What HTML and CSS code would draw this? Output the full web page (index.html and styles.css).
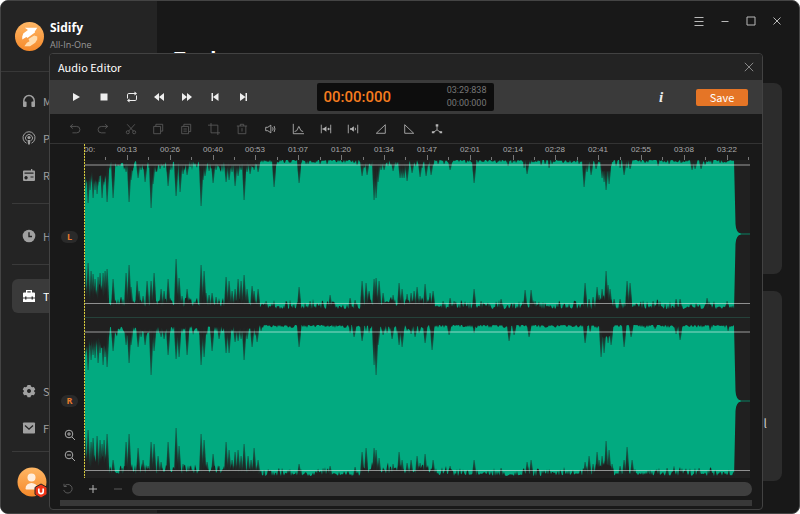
FILE: index.html
```html
<!DOCTYPE html>
<html lang="en">
<head>
<meta charset="utf-8">
<title>Sidify All-In-One</title>
<link rel="stylesheet" href="styles.css">
</head>
<body>
<div class="window">
  <aside class="sidebar">
    <header class="brand">
      <svg class="brand-logo" viewBox="0 0 28 28" aria-hidden="true">
        <defs><linearGradient id="orange" x1="0" y1="0" x2="0" y2="1"><stop offset="0" stop-color="#ffb765"/><stop offset="1" stop-color="#f5892a"/></linearGradient></defs>
        <circle cx="14" cy="14" r="14" fill="url(#orange)"/>
        <path d="M9.500 5.500H21.500L19 9.500L19.500 10L12 15.500L11 14.500L7 17V14L8 11L12.500 7.800Z" fill="#fff"/>
        <path d="M13 16.500L18.500 13L21.500 14V17L19.500 20L14.500 23.500H9L11.500 20L14 18.500Z" fill="#ffdcae"/>
      </svg>
      <div><div class="brand-name">Sidify</div><div class="brand-sub">All-In-One</div></div>
    </header>
    <nav class="nav">
      <a class="nav-item" href="#"><svg viewBox="0 0 14 14"><path d="M1.800 8V6.800a5.200 5.200 0 0 1 10.400 0V8" fill="none" stroke="currentColor" stroke-width="1.500"/><rect x="1" y="7.500" width="3.600" height="5.500" rx="1"/><rect x="9.400" y="7.500" width="3.600" height="5.500" rx="1"/></svg>M</a>
      <a class="nav-item" href="#"><svg viewBox="0 0 14 14"><g fill="none" stroke="currentColor"><path d="M4.500 12.200a6 6 0 1 1 5 0"/><path d="M4.500 9.500a3.500 3.500 0 1 1 5 0"/></g><circle cx="7" cy="6.500" r="1.600"/><path d="M5.500 9h3l-.6 4.500H6.100z"/></svg>P</a>
      <a class="nav-item" href="#"><svg viewBox="0 0 14 14"><path fill-rule="evenodd" d="M2 2.500h7V1h1.300v1.500H12a1 1 0 0 1 1 1V12a1 1 0 0 1-1 1H2a1 1 0 0 1-1-1V3.500a1 1 0 0 1 1-1zM2.500 4.500v1.300h9V4.500zM4 8a1.700 1.700 0 1 0 .1 0zM8.500 8.500v1h3v-1z"/></svg>R</a>
      <hr>
      <a class="nav-item" href="#"><svg viewBox="0 0 14 14"><circle cx="7" cy="7" r="6.300"/><path d="M7 3.300V7.500H10" fill="none" stroke="#242424" stroke-width="1.400"/></svg>H</a>
      <hr>
      <a class="nav-item active" href="#"><svg viewBox="0 0 14 14"><path fill-rule="evenodd" d="M4 3.500V1h6v2.500h2a1 1 0 0 1 1 1V8.500H11V7.500H9.500V8.500H4.500V7.500H3V8.500H1v-4a1 1 0 0 1 1-1zM5.300 2.200v1.300h3.400V2.200zM1 9.500h2v1h1.500v-1h5v1H11v-1h2V13H1z"/></svg>To</a>
    </nav>
    <nav class="nav nav-bottom">
      <a class="nav-item" href="#"><svg viewBox="0 0 14 14"><path fill-rule="evenodd" d="M5.500 1h3l.5 1.600 1.200.7 1.700-.4 1.400 2.500L12.200 6.500v1.200l1.100 1.100-1.400 2.500-1.700-.4-1.200.7-.5 1.600h-3L5 11.600l-1.200-.7-1.700.4L.7 8.800l1.100-1.100V6.500L.7 5.400l1.400-2.500 1.700.4L5 2.600zM7 5a2 2 0 1 0 .01 0z"/></svg>S</a>
      <a class="nav-item" href="#"><svg viewBox="0 0 14 14"><rect x="1" y="1.500" width="12" height="11" rx=".8"/><path d="M3 4.500l4 3.700 4-3.700" fill="none" stroke="#242424" stroke-width="1.300"/></svg>Fe</a>
      <hr>
    </nav>
    <button class="account" type="button" aria-label="Account">
      <svg viewBox="0 0 32 32"><circle cx="15" cy="15" r="14.500" fill="url(#orange)"/><circle cx="14.500" cy="10.500" r="4" fill="#ffeedd"/><path d="M8.500 21.500a6 5.500 0 0 1 12 0q0 1-1 1h-10q-1 0-1-1z" fill="#ffeedd"/><path d="M24 17l6 3.400v7L24 31l-6-3.600v-7z" fill="#ee3518" stroke="#242424"/><path d="M21.800 21.500v3a2.200 2.200 0 0 0 4.400 0v-3" fill="none" stroke="#fff" stroke-width="1.700"/></svg>
    </button>
  </aside>

  <main class="main">
    <div class="window-controls">
      <button type="button" aria-label="Menu"><svg viewBox="0 0 10 10"><path d="M.5 1.500h9M.5 5.500h9M.5 9.500h9"/></svg></button>
      <button type="button" aria-label="Minimize"><svg viewBox="0 0 10 10"><path d="M1.500 5.500h7"/></svg></button>
      <button type="button" aria-label="Maximize"><svg viewBox="0 0 10 10"><path d="M1 1h8v8H1z"/></svg></button>
      <button type="button" aria-label="Close"><svg viewBox="0 0 10 10"><path d="M1.500 1.500l7 7M8.500 1.500l-7 7"/></svg></button>
    </div>
    <h1>Tools</h1>
    <div class="cards"><section class="card"></section><section class="card"><span>l</span></section></div>
  </main>

  <div class="dialog" role="dialog" aria-labelledby="dialog-title">
    <header class="dialog-head"><h2 id="dialog-title">Audio Editor</h2>
      <button type="button" aria-label="Close editor"><svg viewBox="0 0 10 10"><path d="M.8 .8l8.400 8.400M9.200 .8L.8 9.200"/></svg></button>
    </header>
    <div class="transport">
      <div class="playback">
        <button type="button" aria-label="Play"><svg viewBox="0 0 14 14"><path d="M4 3l7 4-7 4z"/></svg></button>
        <button type="button" aria-label="Stop"><svg viewBox="0 0 14 14"><path d="M3.500 3.500h7v7h-7z"/></svg></button>
        <button type="button" aria-label="Loop"><svg viewBox="0 0 14 14"><path d="M2.500 8.500V4.800q0-1.300 1.300-1.300H11M11.500 5.500v3.700q0 1.300-1.300 1.300H3" fill="none" stroke="currentColor"/><path d="M9.500 1.500l2.500 2-2.500 2zM4.500 8.500l-2.500 2 2.500 2z"/></svg></button>
        <button type="button" aria-label="Rewind"><svg viewBox="0 0 14 14"><path d="M7 3v8L2 7zM12 3v8L7 7z"/></svg></button>
        <button type="button" aria-label="Forward"><svg viewBox="0 0 14 14"><path d="M2 3v8l5-4zM7 3v8l5-4z"/></svg></button>
        <button type="button" aria-label="Go to start"><svg viewBox="0 0 14 14"><path d="M3.500 3H5v8H3.500zM10.500 3v8L5 7z"/></svg></button>
        <button type="button" aria-label="Go to end"><svg viewBox="0 0 14 14"><path d="M9.500 3H11v8H9.500zM4 3v8l5.500-4z"/></svg></button>
      </div>
      <div class="readout"><output class="time-now">00:00:000</output><div class="time-total"><span>03:29:838</span><span>00:00:000</span></div></div>
      <div class="transport-end">
        <button class="info" type="button">i</button>
        <button class="save" type="button">Save</button>
      </div>
    </div>
    <div class="tools">
      <button type="button" disabled aria-label="Undo"><svg viewBox="0 0 14 14"><path d="M4.500 1.500l-3 2.500 3 2.500M1.500 4H9a3.500 3.500 0 0 1 0 7.500H4"/></svg></button>
      <button type="button" disabled aria-label="Redo"><svg viewBox="0 0 14 14"><path d="M9.500 1.500l3 2.500-3 2.500M12.500 4H5a3.500 3.500 0 0 0 0 7.500h5"/></svg></button>
      <button type="button" disabled aria-label="Cut"><svg viewBox="0 0 14 14"><path d="M2.500 1.500l7.300 8M11.500 1.500l-7.300 8"/><circle cx="3.300" cy="10.800" r="1.800"/><circle cx="10.700" cy="10.800" r="1.800"/></svg></button>
      <button type="button" disabled aria-label="Copy"><svg viewBox="0 0 14 14"><path d="M4.500 3.500v-2h8v8h-2M2 4h8v8.500H2z"/></svg></button>
      <button type="button" disabled aria-label="Paste"><svg viewBox="0 0 14 14"><path d="M4.500 3.500v-2h8v8.500h-2M2 4h8v8.500H2zM4 7h4M4 9.500h4"/></svg></button>
      <button type="button" disabled aria-label="Crop"><svg viewBox="0 0 14 14"><path d="M3.500 0v11.500H14M0 2.500h11.500V14"/></svg></button>
      <button type="button" disabled aria-label="Delete"><svg viewBox="0 0 14 14"><path d="M1 3.500h12M5 3.500v-2h4v2M2.500 3.500v9h9v-9M7 6v4"/></svg></button>
      <button type="button" aria-label="Volume"><svg viewBox="0 0 14 14"><path d="M2 5h2.500L8 2.500v9L4.500 9H2zM10 5q1.200 2 0 4M11.800 3.500q2 3.500 0 7"/></svg></button>
      <button type="button" aria-label="Envelope"><svg viewBox="0 0 14 14"><path d="M1.500 1v11.500H14M3 10l2.500-1 2.500-5 2.500 5 2.500 1"/></svg></button>
      <button type="button" aria-label="Trim silence"><svg viewBox="0 0 14 14"><path d="M1.500 2v10M12.500 2v10M9 7h3.500"/><path class="solid" d="M3 6h1.500l3-2.200v6.400L4.500 8H3zM8.500 7l2-1.800v3.600z"/></svg></button>
      <button type="button" aria-label="Insert silence"><svg viewBox="0 0 14 14"><path d="M1.500 2v10M12.500 2v10M9.500 5.500q1 1.500 0 3"/><path class="solid" d="M3.500 6H5l3-2.200v6.400L5 8H3.500z"/></svg></button>
      <button type="button" aria-label="Fade in"><svg viewBox="0 0 14 14"><path d="M1.500 12h10.500V2z"/></svg></button>
      <button type="button" aria-label="Fade out"><svg viewBox="0 0 14 14"><path d="M2 2v10H12.500z"/></svg></button>
      <button type="button" aria-label="Channels"><svg viewBox="0 0 14 14"><path d="M7 3v5l-4.500 3M7 8l4.500 3"/><path class="solid" d="M5.500 1.500h3v2.700h-3zM1 9.500h3v2.500H1zM10 9.500h3v2.500h-3z"/></svg></button>
    </div>
    <div class="editor">
      <div class="gutter">
        <div class="channel"><span>L</span></div>
        <div class="channel"><span>R</span></div>
        <div class="zoom">
          <button type="button" aria-label="Zoom in"><svg viewBox="0 0 12 12"><circle cx="5" cy="5" r="3.800"/><path d="M8 8l3 3M3 5h4M5 3v4"/></svg></button>
          <button type="button" aria-label="Zoom out"><svg viewBox="0 0 12 12"><circle cx="5" cy="5" r="3.800"/><path d="M8 8l3 3M3 5h4"/></svg></button>
        </div>
      </div>
      <div class="timeline">
        <div class="ruler"></div>
        <svg class="wave" id="wave-left" viewBox="0 0 666 151" preserveAspectRatio="none" aria-label="Left channel"></svg>
        <hr class="track-split">
        <svg class="wave" id="wave-right" viewBox="0 0 666 153" preserveAspectRatio="none" aria-label="Right channel"></svg>
        <div class="playhead"></div>
      </div>
    </div>
    <div class="zoom-row">
      <button type="button" disabled aria-label="Reset zoom"><svg viewBox="0 0 12 12"><path d="M2.500 3A4.300 4.300 0 1 1 1.700 7M2 .8v2.700h2.700"/></svg></button>
      <button type="button" aria-label="Widen"><svg viewBox="0 0 12 12"><path d="M2 6h8M6 2v8"/></svg></button>
      <button type="button" disabled aria-label="Narrow"><svg viewBox="0 0 12 12"><path d="M2 6h8"/></svg></button>
      <div class="range"></div>
    </div>
    <div class="status-bar"></div>
  </div>
</div>
<script src="wave.js"></script>
</body>
</html>
```
FILE: styles.css
```css
* { box-sizing: border-box; }
body { margin: 0; background: #fff; color: #eee; font: 12px/16px "Noto Sans CJK SC", "Open Sans", sans-serif; }
button { padding: 0; border: 0; background: none; color: inherit; font: inherit; display: flex; align-items: center; justify-content: center; }
h1, h2 { margin: 0; }
hr { margin: 0; border: 0; }
svg { display: block; }

.window { position: relative; display: flex; height: 100vh; border: 1px solid #444; border-radius: 8px; background: #181818; overflow: hidden; }
.sidebar { width: 156px; flex: none; display: flex; flex-direction: column; background: #242424; }
.brand { display: flex; gap: 6px; align-items: center; height: 71px; padding-left: 14px; border-bottom: 1px solid #383838; }
.brand-logo { width: 29px; height: 29px; }
.brand-name { font: 700 12px/18px "Open Sans", sans-serif; color: #fff; }
.brand-sub { font: 9px/16px "Open Sans", sans-serif; color: #999; }
.nav { padding: 11px 0 0 11px; }
.nav hr { height: 1px; background: #3a3a3a; margin: 9px 0 14px; }
.nav-item { display: flex; align-items: center; gap: 7px; height: 37px; padding: 0 0 2px 10px; color: #a0a0a0; font-size: 11px; text-decoration: none; }
.nav-item svg { width: 14px; height: 14px; fill: currentColor; }
.nav-item.active { height: 34px; padding-bottom: 0; background: #3a3a3a; color: #fff; border-radius: 6px; }
.nav-bottom { margin-top: auto; padding-top: 0; }
.nav-bottom hr { margin: 4px 0 15px; }
.account { width: 32px; height: 32px; margin: 0 0 14px 16px; }
.account svg { width: 32px; height: 32px; }

.main { flex: 1; display: flex; flex-direction: column; }
.window-controls { display: flex; justify-content: flex-end; gap: 10px; padding: 12px 14px 0 0; height: 46px; color: #b8b8b8; }
.window-controls button { width: 16px; height: 16px; }
.window-controls svg { width: 10px; height: 10px; fill: none; stroke: currentColor; }
h1 { padding-left: 17px; font: 700 20px/24px "Open Sans", sans-serif; color: #fff; }
.cards { flex: 1; display: flex; flex-direction: column; gap: 17px; padding: 12px 17px 32px 17px; }
.card { flex: 1; border-radius: 8px; background: #2c2c2c; }
.card span { display: block; padding: 124px 15px 0 0; text-align: right; color: #ccc; }

.dialog { position: absolute; inset: 52px 36px 3px 48px; display: flex; flex-direction: column; border: 1px solid #424242; border-radius: 4px; background: #191919; overflow: hidden; }
.dialog-head { display: flex; align-items: center; justify-content: space-between; height: 26px; padding: 0 8px; background: #232323; }
.dialog-head h2 { font-size: 11px; font-weight: 400; color: #fff; }
.dialog-head svg { width: 10px; height: 10px; fill: none; stroke: #888; }
.transport { display: grid; grid-template-columns: 1fr auto 1fr; align-items: center; height: 34px; padding: 0 14px 0 12px; background: #3a3a3a; }
.playback { display: grid; grid-template-columns: repeat(7, 1fr); width: 195px; }
.playback svg { width: 14px; height: 14px; fill: currentColor; }
.readout { display: flex; align-items: center; justify-content: space-between; width: 177px; height: 28px; padding: 0 7px; border-radius: 2px; background: #0d0d0d; font-family: Roboto, sans-serif; }
.time-now { color: #f57c1f; font-size: 15px; font-weight: 500; }
.time-total { display: grid; color: #777; font-size: 9px; line-height: 13px; }
.transport-end { display: flex; justify-content: flex-end; align-items: center; gap: 30px; }
.info { width: 10px; font: italic 700 15px/16px "Liberation Serif", serif; }
.save { width: 52px; height: 17px; border-radius: 2px; background: #e57526; color: #fff; font-size: 11px; }
.tools { display: grid; grid-template-columns: repeat(14, 1fr); width: 390px; height: 29px; margin-left: 11px; color: #b5b5b5; }
.tools svg { width: 12px; height: 12px; fill: none; stroke: currentColor; }
.tools .solid { fill: currentColor; stroke: none; }
button:disabled { color: #5a5a5a; }

.editor { display: flex; border-top: 1px solid #333; }
.gutter { width: 34px; flex: none; padding: 87px 0 0 11px; }
.channel { height: 164px; }
.channel span { display: block; width: 17px; height: 12px; border-radius: 6px; background: #2a2a2a; color: #e87a2c; font: 700 9px/12px "Open Sans", sans-serif; text-align: center; }
.zoom { display: grid; gap: 9px; width: 17px; margin-top: -130px; }
.zoom svg, .zoom-row svg { width: 12px; height: 12px; fill: none; stroke: currentColor; }
.zoom { color: #aaa; }
.timeline { position: relative; flex: 1; margin-right: 12px; background: #202020; }
.ruler { display: block; height: 16px; background: #191919; }
.ruler svg { width: 100%; height: 16px; }
.ruler text { fill: #aaa; font: 8px "Liberation Sans", sans-serif; text-anchor: middle; }
.wave { width: 100%; height: 151px; }
#wave-right { height: 153px; }
.track-split { height: 14px; background: linear-gradient(#25423a, #25423a) 0 6px / 100% 1px no-repeat; }
.playhead { position: absolute; inset: 0 auto 0 0; width: 1px; background: repeating-linear-gradient(#d6c93c 0 2px, #3a3820 2px 3px); }
.zoom-row { display: flex; align-items: center; gap: 13px; height: 21px; padding: 0 10px 0 12px; color: #b5b5b5; }
.zoom-row button { width: 12px; }
.range { flex: 1; height: 14px; border-radius: 7px; background: #3f3f3f; margin-left: -5px; }
.status-bar { height: 6px; margin: 1px 10px 0; background: #383838; }
```
FILE: wave.js
```js
// Timeline x of the first sample; transient positions below are in window x.
const ORIGIN = 84;

const leftTop = "85:28 88:43 90:30 93:38 95:30 97:34 99:22 102:38 104:22 107:42 109:8 113:38 116:4 120:6 126:12 129:42 131:20 133:8 138:18 141:10 145:22 149:8 151:48 153:24 156:12 160:9 164:8 168:26 170:10 176:36 180:32 183:14 187:15 190:7 201:46 203:20 205:16 209:11 213:23 216:10 220:8 226:22 229:20 232:12 235:26 238:16 241:10 244:40 247:12 250:14 254:10 258:12 274:27 276:5 299:23 301:3 306:4 308:4 315:3 320:4 327:4 354:3 357:5 362:16 364:8 367:15 371:6 374:40 376:38 378:22 381:10 384:10 388:6 391:5 393:11 396:5 400:18 402:18 404:18 407:21 412:13 420:17 422:8 426:16 431:15 433:5 438:4 444:4 450:10 466:3 474:23 508:6 512:3 524:8 527:14 530:4 541:5 545:4 549:8 552:4 563:3 579:4 584:27 587:12 591:15 596:9 602:18 604:22 606:30 609:24 611:6 616:6 620:8 624:15 627:8 630:9 645:3 658:6 669:4 681:3 692:10 695:9 701:9 705:5 712:4 720:3";
const leftBottom = "85:42 88:48 91:40 93:37 95:32 98:34 100:38 103:38 105:40 107:42 113:32 117:6 121:14 126:38 129:46 131:24 137:30 139:20 143:15 147:30 151:30 154:38 156:10 161:22 164:20 168:32 176:52 179:33 182:15 187:22 190:10 193:8 201:46 204:40 206:18 209:16 212:18 216:14 219:10 226:34 229:30 232:20 235:22 238:32 241:30 244:36 247:22 252:25 254:20 258:22 266:10 275:4 286:10 293:6 299:24 305:8 310:10 330:16 334:9 350:13 355:11 362:30 366:28 369:20 374:32 376:33 379:30 383:18 387:10 393:16 399:28 402:22 407:17 411:18 414:20 417:24 420:15 425:27 430:18 433:20 443:10 450:13 454:10 464:8 474:22 481:10 489:7 501:12 514:8 525:21 531:21 535:10 550:6 563:6 585:28 589:12 593:14 597:24 599:16 602:22 606:40 608:26 610:22 614:12 620:12 624:8 627:30 630:28 650:5 653:10 665:7 676:12 680:12 690:6 696:8 707:13 717:4 727:10 730:4";
const rightTop = "85:30 88:45 91:35 93:30 95:33 98:38 100:28 103:40 105:32 107:42 113:26 126:20 129:38 131:20 138:22 141:12 145:20 151:50 154:26 161:12 164:14 168:30 176:34 179:32 187:30 193:8 201:40 204:32 212:26 219:14 226:28 229:28 235:17 238:16 241:14 244:35 247:14 252:22 257:17 261:6 299:22 350:8 354:12 362:16 369:8 374:40 376:50 378:20 383:10 387:8 392:14 399:20 402:22 411:9 415:12 419:8 425:18 432:25 449:10 474:8 509:16 514:10 529:12 585:18 590:7 601:32 604:28 608:18 611:20 624:22 631:12 645:3 655:4 676:9 680:15 710:5 728:6";
const rightBottom = "85:40 88:48 91:36 93:40 97:42 100:38 102:34 104:38 107:44 113:18 122:10 126:36 129:44 138:30 143:18 148:12 151:36 154:34 158:22 161:16 168:36 176:50 179:32 183:14 190:12 201:44 204:38 207:16 213:24 219:12 226:36 229:28 232:18 235:26 238:28 241:22 244:34 248:22 251:18 254:30 258:18 264:8 299:14 330:12 355:11 362:26 366:30 374:30 376:28 379:20 393:14 399:26 402:18 407:15 411:18 417:22 420:15 425:24 433:18 450:12 474:18 501:10 527:16 531:18 585:16 589:22 593:14 597:26 599:18 602:22 606:37 609:28 612:14 620:12 624:18 627:31 632:18 650:8 667:10 699:10";

let seed = 7;
const random = () => (seed = (seed * 16807) % 2147483647) / 2147483647;
const parse = list => list.split(" ").map(p => p.split(":").map(Number));

// Small irregular gaps along one edge, denser where the music is quieter.
function roughEdge(edge, dir, bottom) {
  let d = `M0 ${edge}`;
  for (let x = 0; x < 651; x += 1) {
    let depth = random() ** 2 * 3 + (bottom ? 1 : 0);
    if (x < 23) depth = 10 + random() * 18;
    else if (x < 175) depth += random() ** 2 * 9 + (bottom ? 3 : 1);
    else if (bottom) depth += random() ** 3 * 8 + 1;
    if (x > 278 && x < 350) depth += random() ** 2 * 6 + (bottom ? 2 : 0);
    if (x > 511 && x < 528) depth += bottom ? 8 : 1;
    if (!bottom && x > 517 && x < 527) depth += 10;
    d += `L${x} ${edge + dir * depth}`;
  }
  return `<path d="${d}L651 ${edge}Z" fill="#202020"/>`;
}

function transients(list, edge, dir, fade) {
  return parse(list).map(([px, depth]) => {
    const x = px - ORIGIN;
    const half = depth > 8 ? 2 : 1;
    return `<path d="M${x - half} ${edge}L${x - 0.5} ${edge + dir * depth}H${x + 0.7}L${x + half + 0.5} ${edge}Z" fill="url(#${fade})"/>`;
  }).join("");
}

function drawWave(id, height, mid, top, bottom, lines) {
  const fade = (name, y1, y2) => `<linearGradient id="${name}" x1="0" x2="0" y1="${y1}" y2="${y2}"><stop offset="0" stop-color="#202020"/><stop offset=".45" stop-color="#202020" stop-opacity=".9"/><stop offset="1" stop-color="#202020" stop-opacity=".45"/></linearGradient>`;
  document.getElementById(id).innerHTML =
    `<defs>${fade(id + "-down", 0, 1)}${fade(id + "-up", 1, 0)}</defs>
    <path d="M0 0H650L651.500 ${mid - 10}Q652 ${mid - 1} 657 ${mid - 0.5}H666V${mid + 0.5}H657Q652 ${mid + 1} 651.500 ${mid + 10}L650 ${height}H0Z" fill="#02aa80"/>
    <path d="M657 ${mid}H666" stroke="#202020" stroke-opacity=".6"/>` +
    roughEdge(0, 1, false) + roughEdge(height, -1, true) +
    transients(top, 0, 1, id + "-down") + transients(bottom, height, -1, id + "-up") +
    `<rect y="${lines[0]}" width="666" height="2" fill="#fff" fill-opacity=".28"/>
    <rect y="${lines[1]}" width="666" height="1" fill="#fff" fill-opacity=".5"/>`;
}

function drawRuler() {
  const labels = "00:13 00:26 00:40 00:53 01:07 01:20 01:34 01:47 02:01 02:14 02:28 02:41 02:55 03:08 03:22".split(" ");
  const step = 42.85;
  let out = `<text x="0" y="8" style="text-anchor:start">00:</text>`;
  for (let i = 1; i <= 31; i += 1) {
    const x = Math.round(i * step / 2);
    out += `<rect x="${x}" y="${i % 2 ? 13 : 11}" width="1" height="${i % 2 ? 3 : 5}" fill="#777"/>`;
  }
  labels.forEach((label, i) => { out += `<text x="${Math.round((i + 1) * step)}" y="8">${label}</text>`; });
  document.querySelector(".ruler").innerHTML = `<svg viewBox="0 0 666 16" preserveAspectRatio="none">${out}</svg>`;
}

drawRuler();
drawWave("wave-left", 151, 74, leftTop, leftBottom, [4, 143]);
drawWave("wave-right", 153, 76, rightTop, rightBottom, [6, 145]);
```
